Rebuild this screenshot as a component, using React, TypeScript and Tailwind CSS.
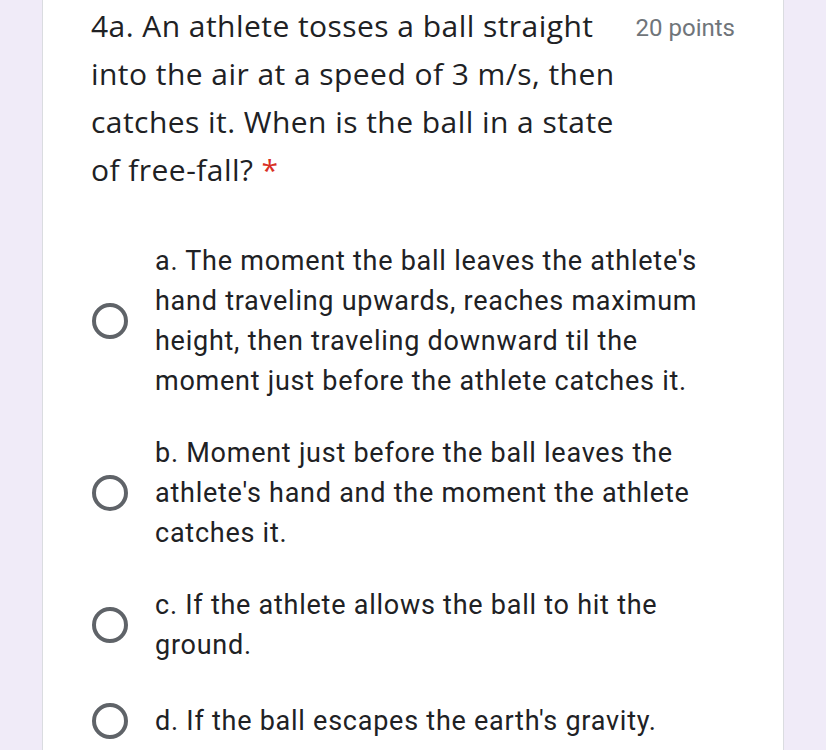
import React from "react";

const options: string[][] = [
  [
    "a. The moment the ball leaves the athlete's",
    "hand traveling upwards, reaches maximum",
    "height, then traveling downward til the",
    "moment just before the athlete catches it.",
  ],
  [
    "b. Moment just before the ball leaves the",
    "athlete's hand and the moment the athlete",
    "catches it.",
  ],
  ["c. If the athlete allows the ball to hit the", "ground."],
  ["d. If the ball escapes the earth's gravity."],
];

function Radio() {
  return (
    <div className="w-[36px] h-[36px] rounded-full border-[4px] border-[#5f6368] shrink-0" />
  );
}

export default function App() {
  return (
    <div className="w-[826px] h-[750px] bg-[#f0ebf8] overflow-hidden flex">
      <div className="ml-[42px] w-[742px] h-full bg-white border-x border-[#dadce0]">
        <div className="flex pl-[48px] pr-[48px]">
          <div
            className="w-[540px] text-[30px] leading-[48px] tracking-[0.45px] text-[#202124] pt-[2px]"
            style={{ fontFamily: '"Open Sans", sans-serif' }}
          >
            <div>4a. An athlete tosses a ball straight</div>
            <div>into the air at a speed of 3 m/s, then</div>
            <div>catches it. When is the ball in a state</div>
            <div>
              of free-fall? <span className="text-[#d93025]">*</span>
            </div>
          </div>
          <div
            className="ml-auto pt-[12px] text-[24px] leading-[32px] text-[#70757a]"
            style={{ fontFamily: "Roboto, sans-serif" }}
          >
            20 points
          </div>
        </div>
        <div
          className="pl-[49px] pt-[47px] flex flex-col gap-[32px]"
          style={{ fontFamily: "Roboto, sans-serif" }}
        >
          {options.map((lines, i) => (
            <div
              key={i}
              className={
                i === options.length - 1
                  ? "flex items-center gap-[27px] mt-[4px]"
                  : "flex items-center gap-[27px]"
              }
            >
              <Radio />
              <div className="text-[27px] leading-[40px] tracking-[0.75px] text-[#202124]">
                {lines.map((l, j) => (
                  <div key={j}>{l}</div>
                ))}
              </div>
            </div>
          ))}
        </div>
      </div>
    </div>
  );
}
